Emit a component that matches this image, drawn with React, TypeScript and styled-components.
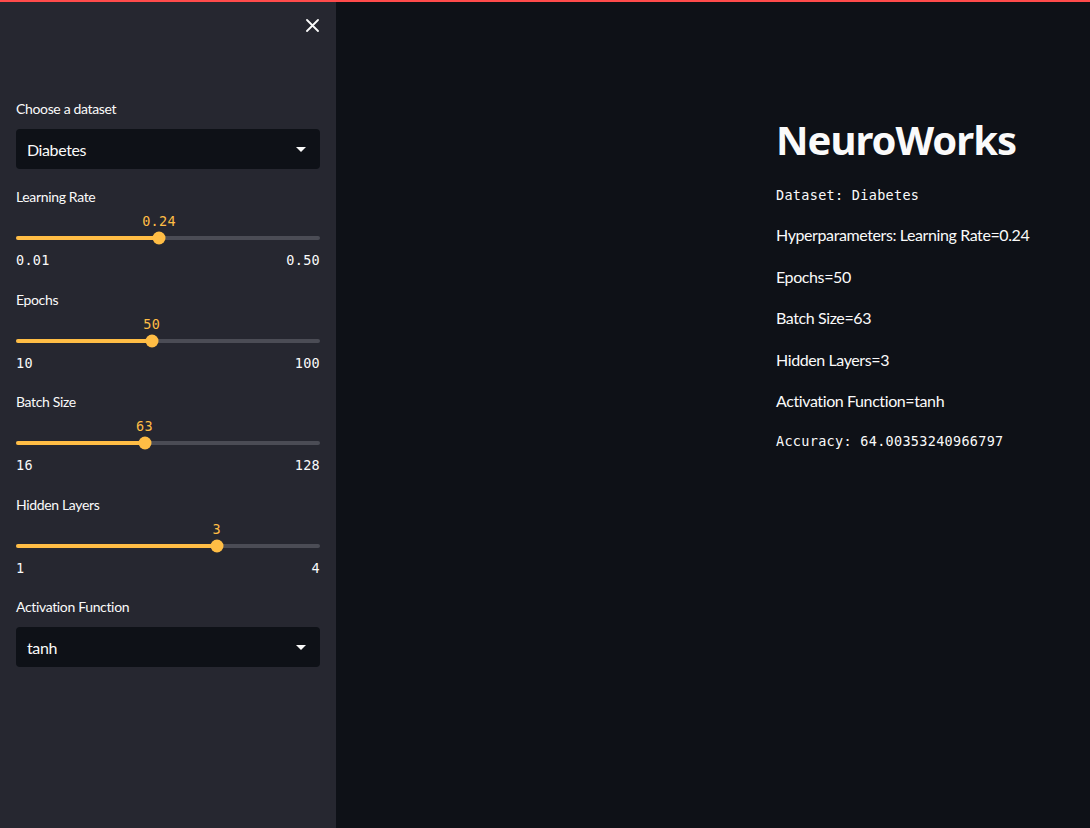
import React from "react";
import styled, { createGlobalStyle } from "styled-components";

const Global = createGlobalStyle`
  html, body { margin: 0; padding: 0; background: #0e1117; }
  body { font-family: "Lato", "Noto Sans", sans-serif; color: #fafafa; }
  * { box-sizing: border-box; }
`;

const Sans = `"Lato", "Noto Sans", sans-serif`;
const Mono = `"DejaVu Sans Mono", "Liberation Mono", monospace`;

const Page = styled.div`
  display: flex;
  width: 1090px;
  height: 828px;
  background: #0e1117;
  border-top: 2px solid #ff4b4b;
  overflow: hidden;
`;

const Sidebar = styled.aside`
  width: 336px;
  flex: none;
  background: #262730;
  display: flex;
  flex-direction: column;
  padding: 0 16px;
`;

const SideHeader = styled.div`
  height: 97px;
  display: flex;
  justify-content: flex-end;
  align-items: flex-start;
  padding-top: 15px;
`;

const CloseButton = styled.button`
  width: 16px;
  height: 16px;
  padding: 0;
  border: none;
  background: transparent;
  color: #fafafa;
  display: flex;
  align-items: center;
  justify-content: center;
`;

const Widgets = styled.div`
  display: flex;
  flex-direction: column;
  gap: 18px;
`;

const Block = styled.div`
  display: flex;
  flex-direction: column;
`;

const Label = styled.div<{ $gap: number }>`
  font-family: ${Sans};
  font-size: 14px;
  letter-spacing: -0.025em;
  line-height: 20px;
  height: 20px;
  margin-bottom: ${(p) => p.$gap}px;
  color: #fafafa;
`;

const SelectBox = styled.div`
  height: 40px;
  background: #0e1117;
  border-radius: 4px;
  display: flex;
  align-items: center;
  justify-content: space-between;
  padding: 0 14px 0 11px;
  font-family: ${Sans};
  font-size: 16px;
  letter-spacing: -0.025em;
  color: #fafafa;
`;

const Caret = styled.span`
  width: 0;
  height: 0;
  border-left: 5px solid transparent;
  border-right: 5px solid transparent;
  border-top: 5px solid #fafafa;
`;

const ValueRow = styled.div`
  position: relative;
  height: 20px;
`;

const ValueText = styled.span`
  position: absolute;
  top: 0;
  transform: translateX(-50%);
  font-family: ${Mono};
  font-size: 13.5px;
  letter-spacing: 0.3px;
  line-height: 20px;
  color: #ffbd45;
`;

const Track = styled.div`
  position: relative;
  height: 14px;
  display: flex;
  align-items: center;
`;

const Rail = styled.div`
  width: 100%;
  height: 4px;
  border-radius: 2px;
  background: #4b4c55;
  position: relative;
`;

const Fill = styled.div`
  position: absolute;
  left: 0;
  top: 0;
  height: 4px;
  border-radius: 2px;
  background: #ffbd45;
`;

const Thumb = styled.div`
  position: absolute;
  top: 50%;
  width: 13px;
  height: 13px;
  border-radius: 50%;
  background: #ffbd45;
  transform: translate(-50%, -50%);
`;

const Ticks = styled.div`
  display: flex;
  justify-content: space-between;
  padding-top: 5px;
  height: 26.5px;
  font-family: ${Mono};
  font-size: 13.5px;
  letter-spacing: 0.3px;
  line-height: 20px;
  color: #fafafa;
`;

const Main = styled.main`
  flex: 1;
  padding: 108px 0 0 440px;
  display: flex;
  flex-direction: column;
`;

const Title = styled.h1`
  margin: 0 0 14.5px 0;
  font-family: "Noto Sans", "Lato", sans-serif;
  font-weight: 700;
  font-size: 40px;
  line-height: 60px;
  color: #fafafa;
  letter-spacing: -1px;
`;

const Text = styled.p`
  margin: 0 0 17.5px 0;
  font-family: ${Sans};
  font-size: 16px;
  letter-spacing: -0.025em;
  line-height: 24px;
  color: #fafafa;
`;

const Code = styled.p`
  margin: 0 0 17.5px 0;
  font-family: ${Mono};
  font-size: 13.5px;
  letter-spacing: 0.3px;
  line-height: 21px;
  color: #fafafa;
`;

const TRACK_W = 304;

function Slider({
  label,
  min,
  max,
  value,
  fmt,
}: {
  label: string;
  min: number;
  max: number;
  value: number;
  fmt: (n: number) => string;
}) {
  const r = (value - min) / (max - min);
  const x = 6 + r * (TRACK_W - 12);
  return (
    <Block>
      <Label $gap={4}>{label}</Label>
      <ValueRow>
        <ValueText style={{ left: x }}>{fmt(value)}</ValueText>
      </ValueRow>
      <Track>
        <Rail>
          <Fill style={{ width: x }} />
        </Rail>
        <Thumb style={{ left: x }} />
      </Track>
      <Ticks>
        <span>{fmt(min)}</span>
        <span>{fmt(max)}</span>
      </Ticks>
    </Block>
  );
}

function Select({ label, value }: { label: string; value: string }) {
  return (
    <Block>
      <Label $gap={10}>{label}</Label>
      <SelectBox>
        <span>{value}</span>
        <Caret />
      </SelectBox>
    </Block>
  );
}

const f2 = (n: number) => n.toFixed(2);
const f0 = (n: number) => String(Math.round(n));

export default function App() {
  return (
    <>
      <Global />
      <Page>
        <Sidebar>
          <SideHeader>
            <CloseButton aria-label="Close sidebar">
              <svg width="13" height="13" viewBox="0 0 13 13">
                <path d="M1 1L12 12M12 1L1 12" stroke="#fafafa" strokeWidth="1.8" strokeLinecap="round" />
              </svg>
            </CloseButton>
          </SideHeader>
          <Widgets>
            <Select label="Choose a dataset" value="Diabetes" />
            <Slider label="Learning Rate" min={0.01} max={0.5} value={0.24} fmt={f2} />
            <Slider label="Epochs" min={10} max={100} value={50} fmt={f0} />
            <Slider label="Batch Size" min={16} max={128} value={63} fmt={f0} />
            <Slider label="Hidden Layers" min={1} max={4} value={3} fmt={f0} />
            <Select label="Activation Function" value="tanh" />
          </Widgets>
        </Sidebar>
        <Main>
          <Title>NeuroWorks</Title>
          <Code>Dataset: Diabetes</Code>
          <Text>Hyperparameters: Learning Rate=0.24</Text>
          <Text>Epochs=50</Text>
          <Text>Batch Size=63</Text>
          <Text>Hidden Layers=3</Text>
          <Text>Activation Function=tanh</Text>
          <Code>Accuracy: 64.00353240966797</Code>
        </Main>
      </Page>
    </>
  );
}
